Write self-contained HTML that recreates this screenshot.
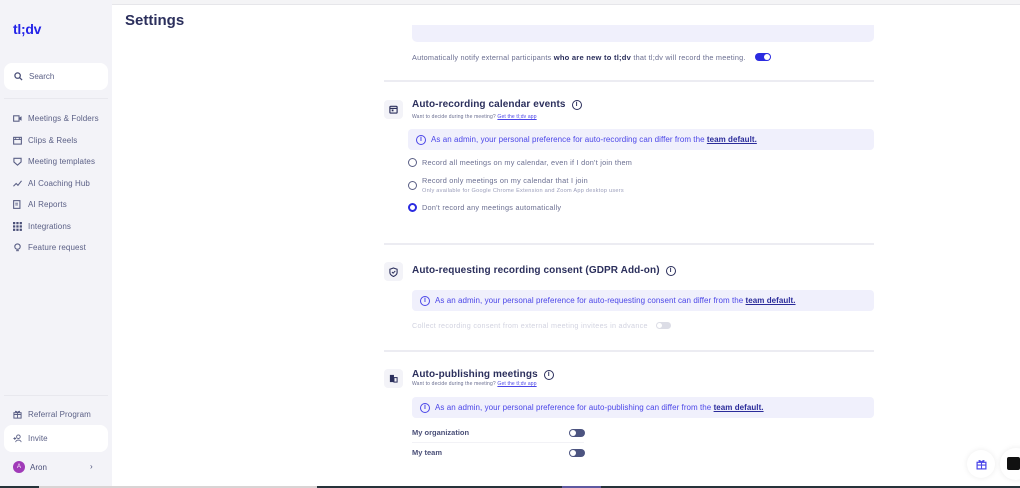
<!DOCTYPE html>
<html><head><meta charset="utf-8"><style>
*{box-sizing:border-box;margin:0;padding:0}
body{width:1020px;height:488px;overflow:hidden;background:#fff;font-family:"Liberation Sans",sans-serif;position:relative;color:#2b2f5c}
.a{position:absolute}
.sb{left:0;top:0;width:112px;height:488px;background:#f3f3f8}
.nav{left:13px;font-size:8px;color:#5a5f85;display:flex;align-items:center;gap:6px;height:12px;letter-spacing:0.1px}
.nav svg{width:9px;height:9px}
.hr{height:2px;background:#ececf2;left:384px;width:490px}
.h{font-size:10px;font-weight:bold;color:#2b2f5c;display:flex;align-items:center;gap:6px;letter-spacing:0.1px}
.info{width:10px;height:10px;border:1.3px solid #2b2f5c;border-radius:50%;font-size:7px;display:inline-flex;align-items:center;justify-content:center;font-weight:bold}
.sub{font-size:5px;color:#6a6e90;letter-spacing:0.15px}
.sub u{color:#4b46e8}
.ban{background:#f0f0fc;border-radius:4px;height:21px;font-size:8px;color:#4b46e8;padding-left:8px;line-height:21px;white-space:nowrap;letter-spacing:0.05px}
.ban b{color:#2a2b9a;text-decoration:underline}
.bi{width:10px;height:10px;border:1.3px solid #4b46e8;border-radius:50%;font-size:7px;display:inline-flex;align-items:center;justify-content:center;font-weight:bold;vertical-align:middle;margin-right:5px;line-height:1}
.ic{width:19px;height:19px;border-radius:4px;background:#f3f3f8;display:flex;align-items:center;justify-content:center}
.rad{font-size:7.3px;color:#6a6e90;display:flex;align-items:center;gap:5px;letter-spacing:0.25px}
.rc{width:9px;height:9px;border:1.3px solid #5a5f85;border-radius:50%;flex:none}
.tg{width:16px;height:8px;border-radius:4px;background:#4c5480;position:absolute}
.tg:after{content:"";position:absolute;left:1px;top:1px;width:6px;height:6px;border-radius:50%;background:#fff}
</style></head><body>
<div class="a" style="left:0;top:0;width:1020px;height:5px;background:#f4f4f6;border-bottom:1px solid #e6e6ea"></div>
<div class="a sb"></div>
<div class="a" style="left:13px;top:21px;font-size:14px;font-weight:bold;color:#2424e8;letter-spacing:-0.3px">tl;dv</div>
<div class="a" style="left:4px;top:63px;width:104px;height:27px;background:#fff;border-radius:8px;display:flex;align-items:center;padding-left:10px;gap:6px;font-size:8px;color:#5a5f85">
<svg width="9" height="9" viewBox="0 0 10 10"><circle cx="4" cy="4" r="3" fill="none" stroke="#4a4f78" stroke-width="1.4"/><path d="M6.3 6.3L9 9" stroke="#4a4f78" stroke-width="1.4"/></svg>Search</div>
<div class="a" style="left:4px;top:98px;width:104px;height:1px;background:#e8e8ee"></div>
<div class="a nav" style="top:112px"><svg viewBox="0 0 10 10"><rect x="0.7" y="2" width="6" height="6" fill="none" stroke="#5a5f85" stroke-width="1.2"/><path d="M7 4l2.5-1.5v5L7 6z" fill="#5a5f85"/></svg>Meetings &amp; Folders</div>
<div class="a nav" style="top:134px"><svg viewBox="0 0 10 10"><rect x="0.7" y="1.5" width="8.6" height="7.5" fill="none" stroke="#5a5f85" stroke-width="1.2"/><path d="M0.7 4h8.6M3 1.5v2.5M7 1.5v2.5" stroke="#5a5f85"/></svg>Clips &amp; Reels</div>
<div class="a nav" style="top:155px"><svg viewBox="0 0 10 10"><path d="M1 1.5h8v4L5 9 1 5.5z" fill="none" stroke="#5a5f85" stroke-width="1.2"/></svg>Meeting templates</div>
<div class="a nav" style="top:177px"><svg viewBox="0 0 10 10"><path d="M0.5 8l3-3 2 2 4-5" fill="none" stroke="#5a5f85" stroke-width="1.2"/></svg>AI Coaching Hub</div>
<div class="a nav" style="top:198px"><svg viewBox="0 0 10 10"><rect x="0.7" y="0.7" width="7" height="8.6" fill="none" stroke="#5a5f85" stroke-width="1.2"/><path d="M2.5 3.5h3M2.5 5.5h3" stroke="#5a5f85"/></svg>AI Reports</div>
<div class="a nav" style="top:220px"><svg viewBox="0 0 10 10" fill="#4a4f78"><rect x="0" y="0" width="2.5" height="2.5"/><rect x="3.7" y="0" width="2.5" height="2.5"/><rect x="7.4" y="0" width="2.5" height="2.5"/><rect x="0" y="3.7" width="2.5" height="2.5"/><rect x="3.7" y="3.7" width="2.5" height="2.5"/><rect x="7.4" y="3.7" width="2.5" height="2.5"/><rect x="0" y="7.4" width="2.5" height="2.5"/><rect x="3.7" y="7.4" width="2.5" height="2.5"/><rect x="7.4" y="7.4" width="2.5" height="2.5"/></svg>Integrations</div>
<div class="a nav" style="top:241px"><svg viewBox="0 0 10 10"><circle cx="5" cy="4" r="3" fill="none" stroke="#5a5f85" stroke-width="1.2"/><path d="M3.5 8.5h3" stroke="#5a5f85" stroke-width="1.2"/></svg>Feature request</div>
<div class="a" style="left:4px;top:395px;width:104px;height:1px;background:#e8e8ee"></div>
<div class="a nav" style="top:408px"><svg viewBox="0 0 10 10"><rect x="1" y="3" width="8" height="6" fill="none" stroke="#5a5f85" stroke-width="1.1"/><path d="M5 3v6M1 5h8M5 3C3 0 1 2 5 3 9 2 7 0 5 3" fill="none" stroke="#5a5f85"/></svg>Referral Program</div>
<div class="a" style="left:4px;top:425px;width:104px;height:27px;background:#fff;border-radius:8px"></div>
<div class="a nav" style="top:432px"><svg viewBox="0 0 10 10"><circle cx="6" cy="3" r="2" fill="none" stroke="#5a5f85"/><path d="M3 9c0-3 6-3 6 0M0.5 5h3M2 3.5v3" fill="none" stroke="#5a5f85"/></svg>Invite</div>
<div class="a" style="left:13px;top:461px;width:12px;height:12px;border-radius:50%;background:#a03ab8;color:#fff;font-size:6px;display:flex;align-items:center;justify-content:center">A</div>
<div class="a" style="left:30px;top:463px;font-size:8px;color:#4a4f78">Aron</div>
<div class="a" style="left:90px;top:462px;font-size:8px;color:#4a4f78">›</div>

<div class="a" style="left:125px;top:12px;font-size:15px;font-weight:bold;color:#2b2f5c">Settings</div>

<div class="a" style="left:412px;top:25px;width:462px;height:17px;background:#f0f0fc;border-radius:0 0 5px 5px"></div>
<div class="a" style="left:412px;top:53px;font-size:7.3px;color:#6a6e90;letter-spacing:0.22px;white-space:nowrap">Automatically notify external participants <b style="color:#2b2f5c;font-size:7.6px">who are new to tl;dv</b> that tl;dv will record the meeting.</div>
<div class="a" style="left:755px;top:53px;width:16px;height:8px;border-radius:4px;background:#2b2be0"><div style="position:absolute;right:1px;top:1px;width:6px;height:6px;border-radius:50%;background:#fff"></div></div>
<div class="a hr" style="top:80px"></div>

<div class="a ic" style="left:384px;top:100px"><svg width="9" height="9" viewBox="0 0 10 10"><rect x="1" y="1.5" width="8" height="7.5" rx="1" fill="none" stroke="#2b2f5c" stroke-width="1.3"/><path d="M1 3.8h8" stroke="#2b2f5c" stroke-width="1.3"/><rect x="3" y="5" width="2" height="2" fill="#2b2f5c"/></svg></div>
<div class="a h" style="left:412px;top:99px">Auto-recording calendar events <span class="info">i</span></div>
<div class="a sub" style="left:412px;top:114px">Want to decide during the meeting? <u>Get the tl;dv app</u></div>
<div class="a ban" style="left:408px;top:129px;width:466px"><span class="bi">i</span>As an admin, your personal preference for auto-recording can differ from the <b>team default.</b></div>
<div class="a rad" style="left:408px;top:158px"><span class="rc"></span>Record all meetings on my calendar, even if I don't join them</div>
<div class="a rad" style="left:408px;top:176px"><span class="rc"></span><span>Record only meetings on my calendar that I join<br><span style="font-size:5.6px;color:#9a9dba">Only available for Google Chrome Extension and Zoom App desktop users</span></span></div>
<div class="a rad" style="left:408px;top:203px"><span class="rc" style="border:2.6px solid #2b2be0"></span>Don't record any meetings automatically</div>
<div class="a hr" style="top:243px"></div>

<div class="a ic" style="left:384px;top:262px"><svg width="9" height="10" viewBox="0 0 10 11"><path d="M5 1L9 2.5V6c0 2-2 3.5-4 4.5C3 9.5 1 8 1 6V2.5z" fill="none" stroke="#2b2f5c" stroke-width="1.2"/><path d="M3.3 5.5l1.3 1.3L7 4.3" fill="none" stroke="#2b2f5c" stroke-width="1.1"/></svg></div>
<div class="a h" style="left:412px;top:265px">Auto-requesting recording consent (GDPR Add-on) <span class="info">i</span></div>
<div class="a ban" style="left:412px;top:290px;width:462px"><span class="bi">i</span>As an admin, your personal preference for auto-requesting consent can differ from the <b>team default.</b></div>
<div class="a" style="left:412px;top:321px;font-size:7.2px;color:#d2d3e0;letter-spacing:0.3px">Collect recording consent from external meeting invitees in advance</div>
<div class="a" style="left:656px;top:322px;width:15px;height:7px;border-radius:4px;background:#dcdde6"><div style="position:absolute;left:1px;top:1px;width:5px;height:5px;border-radius:50%;background:#fff"></div></div>
<div class="a hr" style="top:350px"></div>

<div class="a ic" style="left:384px;top:369px"><svg width="9" height="9" viewBox="0 0 10 10"><rect x="1" y="1" width="4.5" height="8" fill="#2b2f5c"/><rect x="5.5" y="4" width="3.5" height="5" fill="none" stroke="#2b2f5c" stroke-width="1.1"/></svg></div>
<div class="a h" style="left:412px;top:369px">Auto-publishing meetings <span class="info">i</span></div>
<div class="a sub" style="left:412px;top:381px">Want to decide during the meeting? <u>Get the tl;dv app</u></div>
<div class="a ban" style="left:412px;top:397px;width:462px"><span class="bi">i</span>As an admin, your personal preference for auto-publishing can differ from the <b>team default.</b></div>
<div class="a" style="left:412px;top:428px;font-size:7.5px;font-weight:bold;color:#4a4f78">My organization</div>
<div class="tg" style="left:569px;top:429px"></div>
<div class="a" style="left:412px;top:442px;width:172px;height:1px;background:#f2f2f6"></div>
<div class="a" style="left:412px;top:448px;font-size:7.5px;font-weight:bold;color:#4a4f78">My team</div>
<div class="tg" style="left:569px;top:449px"></div>

<div class="a" style="left:967px;top:450px;width:28px;height:28px;border-radius:50%;background:#fff;box-shadow:0 0 6px rgba(0,0,0,.08);display:flex;align-items:center;justify-content:center"><svg width="11" height="11" viewBox="0 0 10 10"><rect x="1" y="3" width="8" height="6" fill="none" stroke="#4b46e8" stroke-width="1.1"/><path d="M5 3v6M1 5.5h8M5 3C3 0 1 2 5 3 9 2 7 0 5 3" fill="none" stroke="#4b46e8"/></svg></div>
<div class="a" style="left:1000px;top:448px;width:32px;height:32px;border-radius:50%;background:#fff;box-shadow:0 0 6px rgba(0,0,0,.08)"><div style="position:absolute;left:7px;top:9px;width:13px;height:13px;border-radius:2px;background:#111"></div></div>

<div class="a" style="left:0;top:486px;width:1020px;height:2px;background:#26333a"></div>
<div class="a" style="left:39px;top:486px;width:278px;height:2px;background:#d8d4d4"></div>
<div class="a" style="left:562px;top:486px;width:39px;height:2px;background:#5e5aa0"></div>
</body></html>
